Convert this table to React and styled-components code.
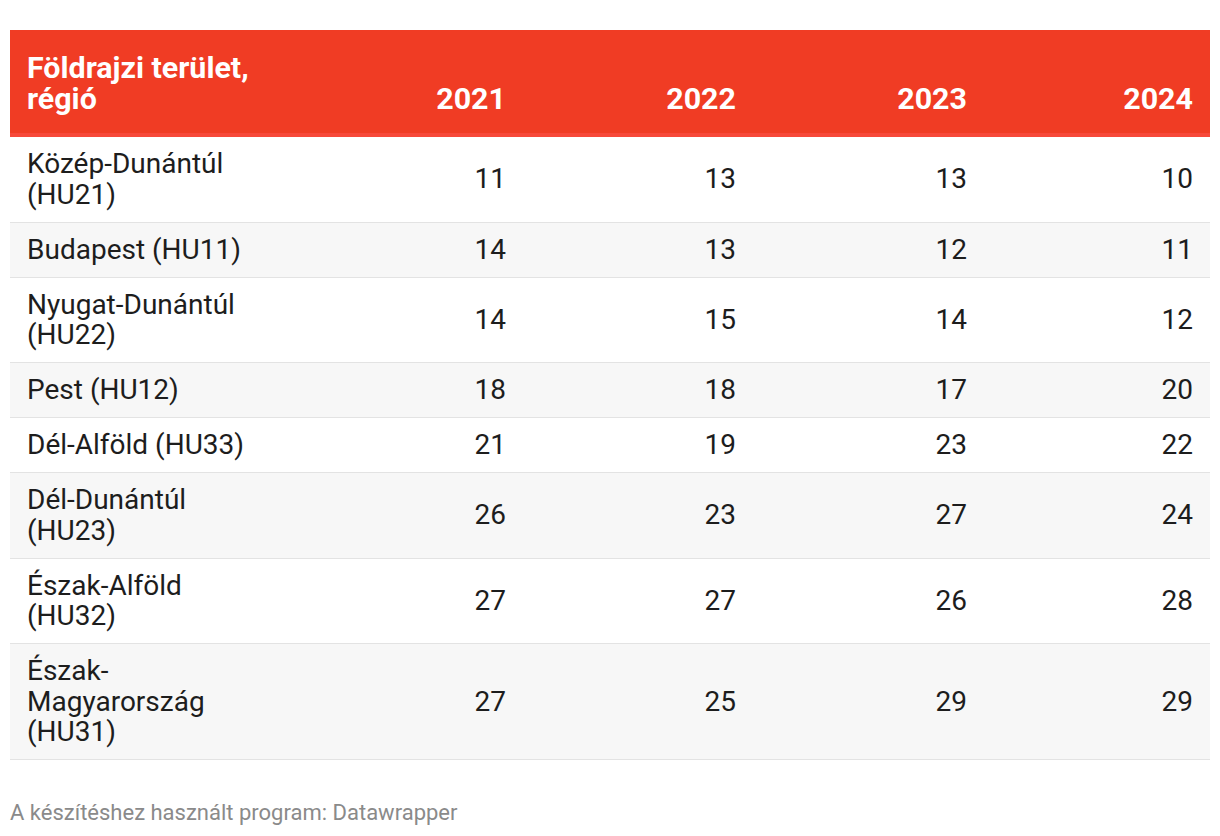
import React from "react";
import styled, { createGlobalStyle } from "styled-components";

const GlobalStyle = createGlobalStyle`
  body {
    margin: 0;
    background: #ffffff;
    font-family: Roboto, "Liberation Sans", sans-serif;
  }
`;

const Page = styled.div`
  padding: 30px 10px 0 10px;
`;

const Table = styled.div`
  display: grid;
  grid-template-columns: 282px 231px 230px 231px 1fr;
`;

const HeadCell = styled.div`
  background: #f03c24;
  border-bottom: 4px solid #f7493a;
  color: #ffffff;
  font-weight: 700;
  font-size: 30.4px;
  line-height: 31px;
  padding: 22px 17px 19px 17px;
  display: flex;
  align-items: flex-end;
  justify-content: ${props => (props.num ? "flex-end" : "flex-start")};
`;

const Cell = styled.div`
  background: ${props => (props.odd ? "#f7f7f7" : "#ffffff")};
  border-bottom: 1px solid #e3e3e3;
  color: #1d1d1d;
  font-size: 28px;
  line-height: 30.5px;
  padding: 12px 17px 11.5px 17px;
  display: flex;
  align-items: center;
  justify-content: ${props => (props.num ? "flex-end" : "flex-start")};
  text-align: ${props => (props.num ? "right" : "left")};
`;

const Footer = styled.div`
  margin-top: 40px;
  color: #8a8a8a;
  font-size: 22px;
  line-height: 26px;
`;

const rows = [
  ["Közép-Dunántúl (HU21)", 11, 13, 13, 10],
  ["Budapest (HU11)", 14, 13, 12, 11],
  ["Nyugat-Dunántúl (HU22)", 14, 15, 14, 12],
  ["Pest (HU12)", 18, 18, 17, 20],
  ["Dél-Alföld (HU33)", 21, 19, 23, 22],
  ["Dél-Dunántúl (HU23)", 26, 23, 27, 24],
  ["Észak-Alföld (HU32)", 27, 27, 26, 28],
  ["Észak-Magyarország (HU31)", 27, 25, 29, 29],
];

const App = () => {
  return (
    <Page>
      <GlobalStyle />
      <Table>
        <HeadCell>Földrajzi terület, régió</HeadCell>
        <HeadCell num>2021</HeadCell>
        <HeadCell num>2022</HeadCell>
        <HeadCell num>2023</HeadCell>
        <HeadCell num>2024</HeadCell>
        {rows.map((row, i) =>
          row.map((value, j) => (
            <Cell key={i + "-" + j} num={j > 0} odd={i % 2 === 1}>
              {value}
            </Cell>
          ))
        )}
      </Table>
      <Footer>A készítéshez használt program: Datawrapper</Footer>
    </Page>
  );
};

export default App;
